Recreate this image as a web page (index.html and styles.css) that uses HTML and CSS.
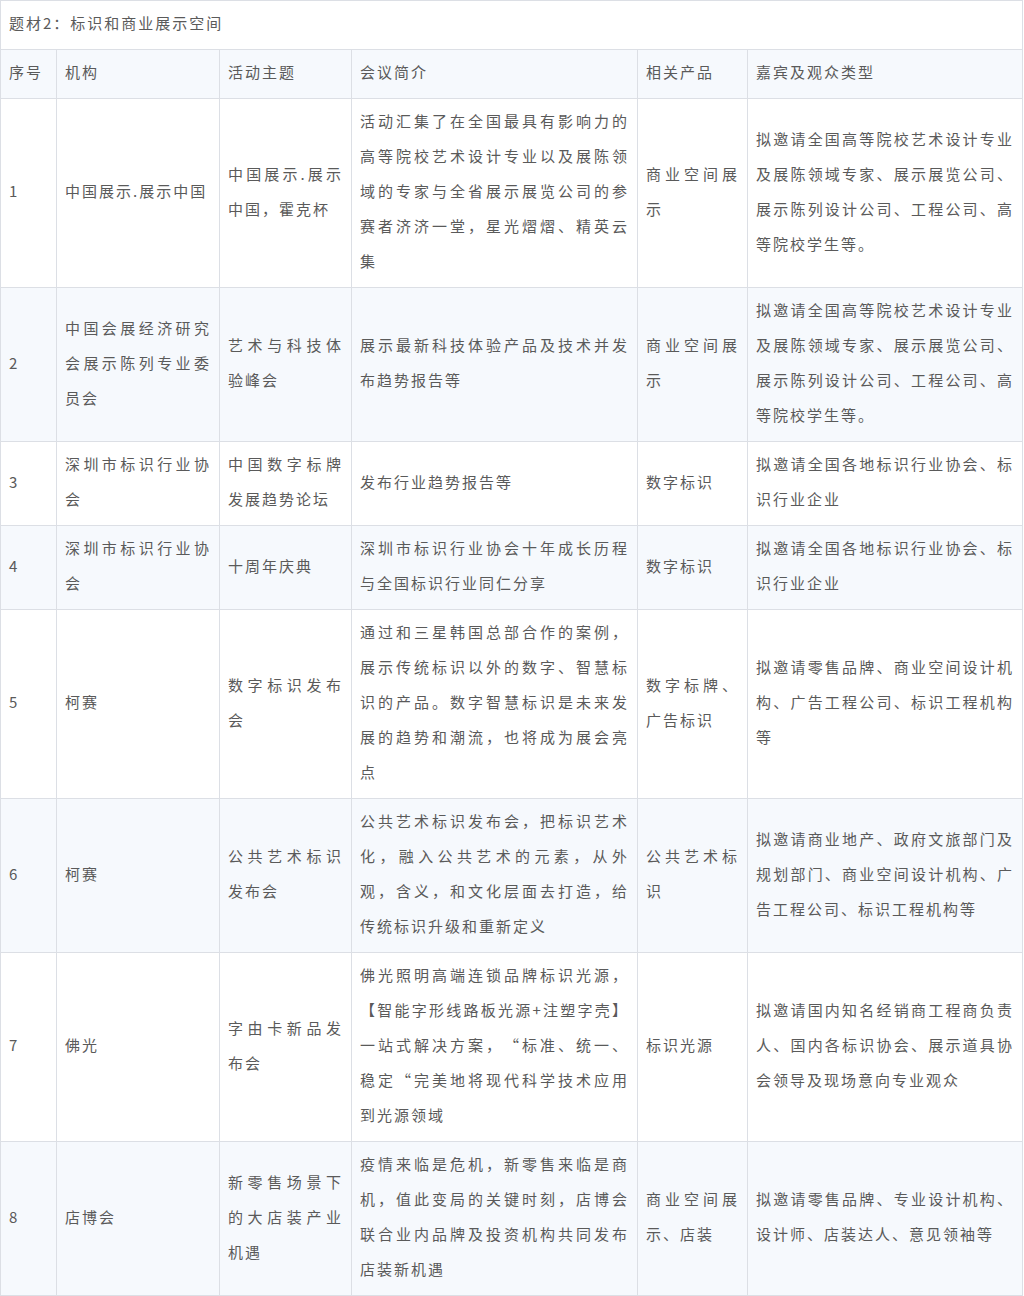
FILE: index.html
```html
<!DOCTYPE html>
<html lang="zh-CN">
<head>
<meta charset="utf-8">
<title>题材2：标识和商业展示空间</title>
<link rel="stylesheet" href="styles.css">
</head>
<body>
<table class="grid">
  <colgroup>
    <col class="c-no">
    <col class="c-org">
    <col class="c-theme">
    <col class="c-intro">
    <col class="c-prod">
    <col class="c-guest">
  </colgroup>
  <tbody>
    <tr class="title-row"><td colspan="6">题材2：标识和商业展示空间</td></tr>
    <tr class="alt"><td>序号</td><td>机构</td><td>活动主题</td><td>会议简介</td><td>相关产品</td><td>嘉宾及观众类型</td></tr>
    <tr>
      <td>1</td>
      <td>中国展示.展示中国</td>
      <td>中国展示.展示中国，霍克杯</td>
      <td>活动汇集了在全国最具有影响力的高等院校艺术设计专业以及展陈领域的专家与全省展示展览公司的参赛者济济一堂，星光熠熠、精英云集</td>
      <td>商业空间展示</td>
      <td>拟邀请全国高等院校艺术设计专业及展陈领域专家、展示展览公司、展示陈列设计公司、工程公司、高等院校学生等。</td>
    </tr>
    <tr class="alt">
      <td>2</td>
      <td>中国会展经济研究会展示陈列专业委员会</td>
      <td>艺术与科技体验峰会</td>
      <td>展示最新科技体验产品及技术并发布趋势报告等</td>
      <td>商业空间展示</td>
      <td>拟邀请全国高等院校艺术设计专业及展陈领域专家、展示展览公司、展示陈列设计公司、工程公司、高等院校学生等。</td>
    </tr>
    <tr>
      <td>3</td>
      <td>深圳市标识行业协会</td>
      <td>中国数字标牌发展趋势论坛</td>
      <td>发布行业趋势报告等</td>
      <td>数字标识</td>
      <td>拟邀请全国各地标识行业协会、标识行业企业</td>
    </tr>
    <tr class="alt">
      <td>4</td>
      <td>深圳市标识行业协会</td>
      <td>十周年庆典</td>
      <td>深圳市标识行业协会十年成长历程与全国标识行业同仁分享</td>
      <td>数字标识</td>
      <td>拟邀请全国各地标识行业协会、标识行业企业</td>
    </tr>
    <tr>
      <td>5</td>
      <td>柯赛</td>
      <td>数字标识发布会</td>
      <td>通过和三星韩国总部合作的案例，展示传统标识以外的数字、智慧标识的产品。数字智慧标识是未来发展的趋势和潮流，也将成为展会亮点</td>
      <td>数字标牌、广告标识</td>
      <td>拟邀请零售品牌、商业空间设计机构、广告工程公司、标识工程机构等</td>
    </tr>
    <tr class="alt">
      <td>6</td>
      <td>柯赛</td>
      <td>公共艺术标识发布会</td>
      <td>公共艺术标识发布会，把标识艺术化，融入公共艺术的元素，从外观，含义，和文化层面去打造，给传统标识升级和重新定义</td>
      <td>公共艺术标识</td>
      <td>拟邀请商业地产、政府文旅部门及规划部门、商业空间设计机构、广告工程公司、标识工程机构等</td>
    </tr>
    <tr>
      <td>7</td>
      <td>佛光</td>
      <td>字由卡新品发布会</td>
      <td>佛光照明高端连锁品牌标识光源，【智能字形线路板光源+注塑字壳】<span class="fw">一站式解决方案，“标准、统一、稳定“完美地将现代科学技术应用到光源领域</span></td>
      <td>标识光源</td>
      <td>拟邀请国内知名经销商工程商负责人、国内各标识协会、展示道具协会领导及现场意向专业观众</td>
    </tr>
    <tr class="alt">
      <td>8</td>
      <td>店博会</td>
      <td>新零售场景下的大店装产业机遇</td>
      <td>疫情来临是危机，新零售来临是商机，值此变局的关键时刻，店博会联合业内品牌及投资机构共同发布店装新机遇</td>
      <td>商业空间展示、店装</td>
      <td>拟邀请零售品牌、专业设计机构、设计师、店装达人、意见领袖等</td>
    </tr>
  </tbody>
</table>
</body>
</html>
```
FILE: styles.css
```css
html, body {
  margin: 0;
  padding: 0;
  background: #ffffff;
}

body {
  font-family: "Noto Sans CJK SC", "Noto Sans", "Liberation Sans", sans-serif;
  color: #5a5a5a;
}

.grid {
  width: 1023px;
  table-layout: fixed;
  border-collapse: collapse;
  font-size: 15px;
  letter-spacing: 2px;
  line-height: 35px;
  text-spacing-trim: space-all;
}

.c-no { width: 56px; }
.c-org { width: 163px; }
.c-theme { width: 132px; }
.c-intro { width: 286px; }
.c-prod { width: 110px; }
.c-guest { width: 275px; }

.grid td {
  border: 1px solid #dcdfe5;
  padding: 4px 8px 9px;
  vertical-align: middle;
  text-align: justify;
  word-break: break-all;
}

.grid .title-row td {
  letter-spacing: 2px;
  background: #ffffff;
}

.grid .alt td {
  background: #f6f9fd;
}

.fw {
  font-variant-east-asian: full-width;
}
```
